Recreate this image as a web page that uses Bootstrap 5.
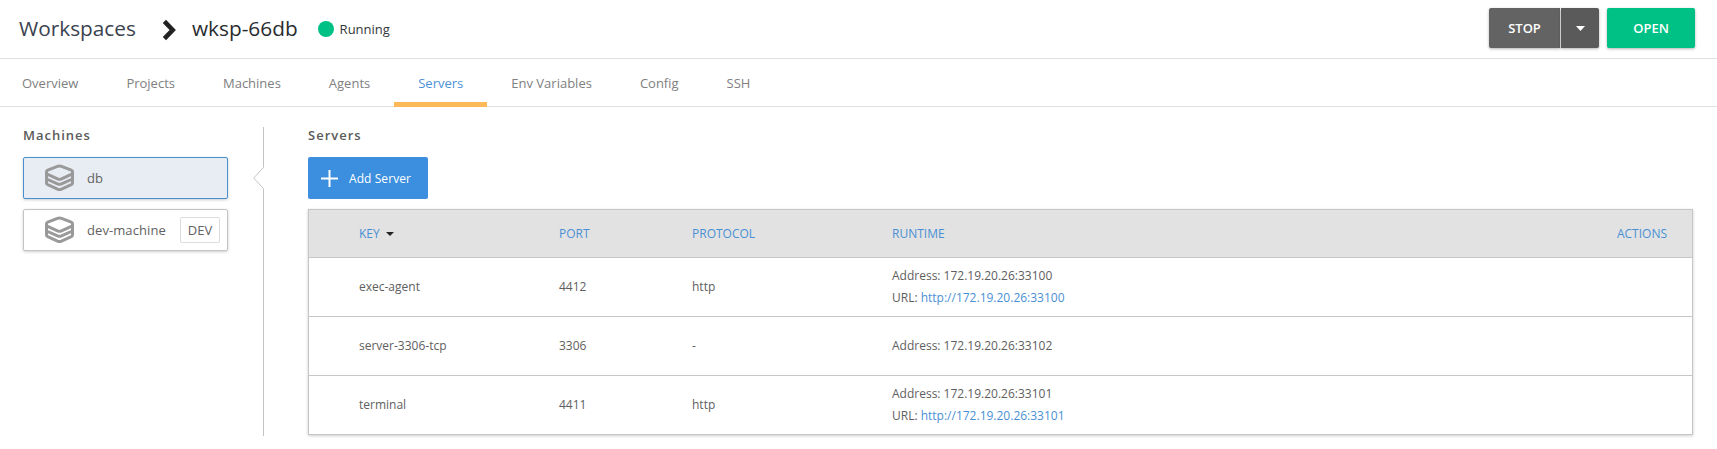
<!DOCTYPE html>
<html lang="en">
<head>
<meta charset="utf-8">
<title>Workspaces - wksp-66db</title>
<link href="https://cdn.jsdelivr.net/npm/bootstrap@5.3.0/dist/css/bootstrap.min.css" rel="stylesheet">
<style>
body{font-family:"Open Sans",sans-serif;font-size:13px;color:#5a5a5a;background:#fff;height:449px;overflow:hidden}
.topbar{height:59px;border-bottom:1px solid #e0e0e0;padding:8px 22px 0 19px}
.crumbs{height:40px;font-size:20.8px;line-height:40px;color:#292c2f}
.crumbs a{color:#3a4250;width:144px}
.crumbs .chev{width:29px}
.state{font-size:13px;color:#33373b;margin-left:20px;padding-top:2px}
.dot{width:16px;height:16px;background:#00c185;margin-right:6px}
.act{height:40px;border:0;border-radius:2px;color:#fff;font-size:13px;font-weight:600;padding:1px 0 0;box-shadow:0 1px 3px rgba(0,0,0,.3)}
.act-stop{width:71px;background:#636363;border-radius:2px 0 0 2px}
.act-more{width:38px;background:#5a5a5a;margin-left:1px;border-radius:0 2px 2px 0}
.act-open{width:88px;background:#00c185;margin-left:8px}
.tabs{height:48px;border-bottom:1px solid #e0e0e0;margin-left:-2px}
.tabs .nav-link{height:48px;padding:0 24px;line-height:49px;color:#808080;font-size:13px;border-radius:0}
.tabs .nav-link.active{color:#4a90d9;box-shadow:inset 0 -5px #fdb857}
.side{width:205px;margin-left:23px}
.ttl{font-size:13px;font-weight:600;letter-spacing:1px;line-height:20px;margin:18px 0 12px;color:#5a5a5a}
.machine{height:42px;border:1px solid #c4c4c4;border-radius:2px;margin-bottom:10px;padding:0 7px 0 21px;box-shadow:0 1px 3px rgba(0,0,0,.2);color:#626262}
.machine.sel{border-color:#4a90cf;background:#e8edf4}
.machine svg{margin-right:13px}
.machine .name{padding-top:2px;letter-spacing:.08px}
.tag{width:40px;height:26px;line-height:25px;border:1px solid #dcdcdc;border-radius:2px;text-align:center}
.split{width:12px;margin:20px 43px 0 25px}
.add{width:120px;height:42px;background:#3b8fde;color:#fff;border:0;border-radius:2px;font-size:12px;font-weight:500;letter-spacing:.08px;padding:0 0 0 13px;margin-bottom:10px}
.add:hover{background:#3b8fde;color:#fff}
.add svg{margin-right:11px}
.add span{padding-top:1px}
.servers{width:1385px;border:1px solid #c6c6c6;box-shadow:0 1px 3px rgba(0,0,0,.2);font-size:12px;color:#5e5e5e}
.line{height:59px;border-top:1px solid #c6c6c6;padding:0 25px 0 50px}
.line.hd{height:47px;border-top:0;background:#e2e2e2;color:#4a90d5}
.c-key{width:200px}.c-port{width:133px}.c-proto{width:200px}
.rt{line-height:22px}
.rt a{color:#4a90d5}
.sort{margin-left:6px}
</style>
<script src="https://cdn.jsdelivr.net/npm/bootstrap@5.3.0/dist/js/bootstrap.bundle.min.js"></script>
</head>
<body>
<svg class="d-none">
  <symbol id="stack" viewBox="0 0 29 28"><g fill="none" stroke="#999" stroke-width="3" stroke-linejoin="round" stroke-linecap="round"><path d="M12.500 2.400Q14.500 1.600 16.500 2.400L26.300 6.200Q27.500 6.700 27.500 7.700V8.700Q27.500 9.800 26.300 10.400L16.500 14.800Q14.500 15.600 12.500 14.800L2.700 10.400Q1.500 9.800 1.500 8.700V7.700Q1.500 6.700 2.700 6.200Z"/><path d="M1.500 9V13.800Q1.500 14.900 2.700 15.500L12.500 19.900Q14.500 20.700 16.500 19.900L26.300 15.500Q27.500 14.900 27.500 13.800V9"/><path d="M1.500 14V18.900Q1.500 20 2.700 20.600L12.500 25.100Q14.500 25.900 16.500 25.100L26.300 20.600Q27.500 20 27.500 18.900V14"/></g></symbol>
</svg>
<header class="topbar d-flex justify-content-between">
  <div class="crumbs d-flex align-items-center">
    <a class="text-decoration-none">Workspaces</a>
    <svg class="chev" height="40" viewBox="0 0 29 40"><path d="M3 15 9.700 22 3 29" fill="none" stroke="#222" stroke-width="4.600" stroke-linecap="square"/></svg>
    <span>wksp-66db</span>
    <span class="state d-flex align-items-center"><span class="dot rounded-circle"></span>Running</span>
  </div>
  <div class="d-flex">
    <button class="btn act act-stop">STOP</button>
    <button class="btn act act-more"><svg class="d-block mx-auto" width="9" height="5"><path d="M0 0H9L4.500 5Z" fill="#fff"/></svg></button>
    <button class="btn act act-open">OPEN</button>
  </div>
</header>
<nav class="nav tabs flex-nowrap">
  <a class="nav-link">Overview</a><a class="nav-link">Projects</a><a class="nav-link">Machines</a><a class="nav-link">Agents</a><a class="nav-link active">Servers</a><a class="nav-link">Env Variables</a><a class="nav-link">Config</a><a class="nav-link">SSH</a>
</nav>
<main class="d-flex">
  <section class="side flex-shrink-0">
    <h2 class="ttl">Machines</h2>
    <div class="machine sel d-flex align-items-center"><svg width="29" height="28"><use href="#stack"/></svg><span class="name">db</span></div>
    <div class="machine d-flex align-items-center"><svg width="29" height="28"><use href="#stack"/></svg><span class="name">dev-machine</span><span class="tag ms-auto">DEV</span></div>
  </section>
  <svg class="split flex-shrink-0" height="309" viewBox="0 0 12 309"><path d="M10.500 0V40.500L.7 51 10.500 61.500V309" fill="none" stroke="#c4c4c4"/></svg>
  <section>
    <h2 class="ttl">Servers</h2>
    <button class="btn add d-flex align-items-center"><svg width="17" height="17"><path d="M8.500 0V17M0 8.500H17" stroke="#fff" stroke-width="2"/></svg><span>Add Server</span></button>
    <div class="servers">
      <div class="line hd d-flex align-items-center"><span class="c-key">KEY<svg class="sort" width="8" height="4"><path d="M0 0H8L4 4Z" fill="#222"/></svg></span><span class="c-port">PORT</span><span class="c-proto">PROTOCOL</span><span>RUNTIME</span><span class="ms-auto">ACTIONS</span></div>
      <div class="line d-flex align-items-center"><span class="c-key">exec-agent</span><span class="c-port">4412</span><span class="c-proto">http</span><div class="rt">Address: 172.19.20.26:33100<br>URL: <a class="text-decoration-none">http://172.19.20.26:33100</a></div></div>
      <div class="line d-flex align-items-center"><span class="c-key">server-3306-tcp</span><span class="c-port">3306</span><span class="c-proto">-</span><div class="rt">Address: 172.19.20.26:33102</div></div>
      <div class="line d-flex align-items-center"><span class="c-key">terminal</span><span class="c-port">4411</span><span class="c-proto">http</span><div class="rt">Address: 172.19.20.26:33101<br>URL: <a class="text-decoration-none">http://172.19.20.26:33101</a></div></div>
    </div>
  </section>
</main>
</body>
</html>
